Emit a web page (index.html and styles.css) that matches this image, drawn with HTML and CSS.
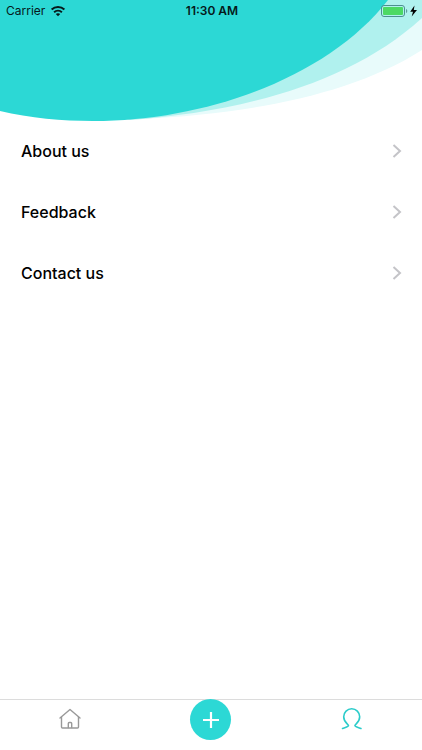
FILE: index.html
```html
<!DOCTYPE html>
<html lang="en">
<head>
<meta charset="utf-8">
<meta name="viewport" content="width=device-width, initial-scale=1">
<title>Profile</title>
<link rel="stylesheet" href="styles.css">
</head>
<body>
<div class="app">
  <header class="hero">
    <svg class="waves" viewBox="0 0 422 124" preserveAspectRatio="none" aria-hidden="true">
      <path fill="#e8fbfb" d="M0 0H422V50C350 96 245 114 140 119L0 80Z"/>
      <path fill="#b0f1ee" d="M0 0H422V18C350 84 240 112 130 120L0 80Z"/>
      <path fill="#2cd8d5" d="M0 0H388C330 75 210 121 93 121C62 121 30 118 0 111Z"/>
    </svg>
    <div class="status">
      <div class="status-side">
        <span>Carrier</span>
        <svg width="16" height="12" viewBox="0 0 16 12" aria-hidden="true">
          <g fill="none" stroke="#06191a" stroke-width="2">
            <path d="M1.600 4.600C5.200 1.200 10.800 1.200 14.400 4.600"/>
            <path d="M4.100 7.200C6.300 5.200 9.700 5.200 11.900 7.200"/>
          </g>
          <path fill="#06191a" d="M5.800 9C7 7.900 9 7.900 10.200 9L8 11.200Z"/>
        </svg>
      </div>
      <span class="time">11:30 AM</span>
      <div class="status-side status-end">
        <svg width="37" height="12" viewBox="0 0 37 12" aria-hidden="true">
          <rect x=".5" y=".5" width="23" height="11" rx="2.500" fill="none" stroke="#4d8f90"/>
          <rect x="2" y="2" width="20" height="8" rx="1" fill="#4cd964"/>
          <path fill="#5f9c9b" d="M25 4C26.700 4.500 26.700 7.500 25 8Z"/>
          <path fill="#000" d="M33.500.5L29.200 6.700H32L30.700 11.500L36 5H32.800Z"/>
        </svg>
      </div>
    </div>
  </header>

  <main class="menu">
    <a class="row" href="#about">About us
      <svg class="chevron" width="10" height="14" viewBox="0 0 10 14" aria-hidden="true"><path d="M1.500 1L8 7L1.500 13"/></svg></a>
    <a class="row" href="#feedback">Feedback
      <svg class="chevron" width="10" height="14" viewBox="0 0 10 14" aria-hidden="true"><path d="M1.500 1L8 7L1.500 13"/></svg></a>
    <a class="row" href="#contact">Contact us
      <svg class="chevron" width="10" height="14" viewBox="0 0 10 14" aria-hidden="true"><path d="M1.500 1L8 7L1.500 13"/></svg></a>
  </main>

  <nav class="tabs">
    <a class="tab" href="#home" aria-label="Home">
      <svg width="24" height="24" viewBox="0 0 24 24" fill="none" stroke="#999" stroke-width="1.400" stroke-linejoin="round" stroke-linecap="round" aria-hidden="true">
        <path d="M2 11L12 2.500L22 11"/>
        <path d="M3.500 10V20Q3.500 21 4.500 21H19.500Q20.500 21 20.500 20V10"/>
        <path d="M10.300 20.500V16.500Q10.300 15.500 11.200 15.500H12.800Q13.700 15.500 13.700 16.500V20.500"/>
      </svg>
    </a>
    <button class="add" type="button" aria-label="Add">
      <svg width="16" height="16" viewBox="0 0 16 16" fill="none" stroke="#fff" stroke-width="2.200" aria-hidden="true"><path d="M8 0V16M0 8H16"/></svg>
    </button>
    <a class="tab" href="#profile" aria-label="Profile" aria-current="page">
      <svg width="24" height="24" viewBox="0 0 24 24" fill="none" stroke="#2cccca" stroke-width="1.600" stroke-linejoin="round" stroke-linecap="round" aria-hidden="true">
        <path d="M2.500 21.500C5 20.500 8.500 20 8.500 18.500C8.500 17.300 3.700 15.500 3.700 9.800C3.700 5.200 7.300 1.800 11.700 1.800S19.700 5.200 19.700 9.800C19.700 15.500 14.900 17.300 14.900 18.500C14.900 20 18.500 20.500 21 21.500"/>
      </svg>
    </a>
  </nav>
</div>
</body>
</html>
```

FILE: styles.css
```css
* {
  box-sizing: border-box;
}

body {
  margin: 0;
  background: #fff;
  color: #000;
  font-family: Inter, "Liberation Sans", sans-serif;
}

.app {
  display: flex;
  flex-direction: column;
  min-height: 100vh;
}

.hero {
  position: relative;
  height: 120px;
}

.waves {
  display: block;
  width: 100%;
  height: 124px;
}

.status {
  position: absolute;
  inset: 0 0 auto;
  display: grid;
  grid-template-columns: 1fr auto 1fr;
  align-items: center;
  height: 21px;
  padding: 0 4px 0 6px;
  color: #06191a;
  font-size: 12px;
}

.status-side {
  display: flex;
  align-items: center;
  gap: 5px;
}

.status-end {
  justify-content: flex-end;
}

.time {
  font-weight: 600;
}

.menu {
  flex: 1;
}

.row {
  display: flex;
  align-items: center;
  justify-content: space-between;
  height: 61px;
  padding: 0 20px 0 21px;
  color: #000;
  font-size: 16px;
  font-weight: 500;
  text-decoration: none;
}

.chevron {
  fill: none;
  stroke: #c4c4c8;
  stroke-width: 2;
}

.tabs {
  display: grid;
  grid-template-columns: repeat(3, 1fr);
  justify-items: center;
  align-items: start;
  height: 51px;
  border-top: 1px solid #dcdcdc;
}

.tab {
  display: flex;
  padding-top: 7px;
}

.add {
  display: grid;
  place-items: center;
  width: 41px;
  height: 41px;
  margin-top: -1px;
  padding: 0;
  border: 0;
  border-radius: 50%;
  background: #2cd8d5;
}
```
